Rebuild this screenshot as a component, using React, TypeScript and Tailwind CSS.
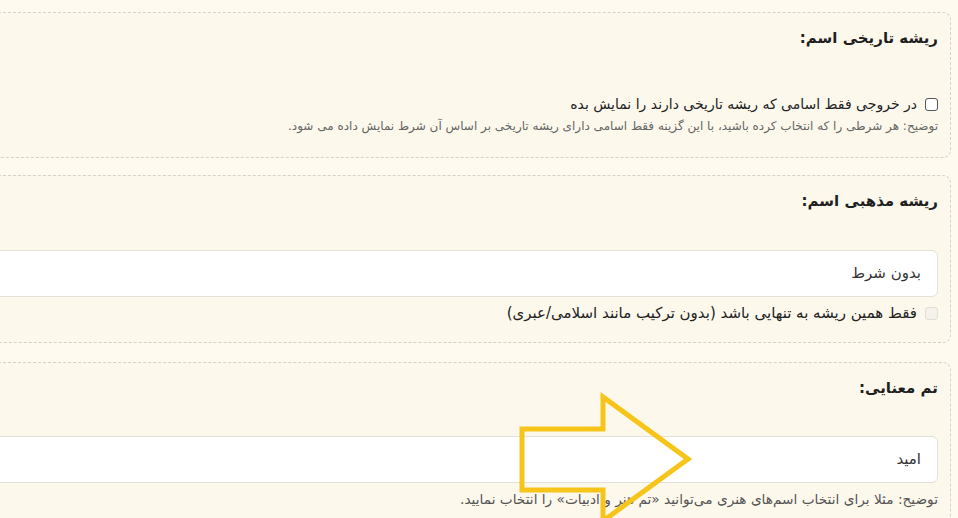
const FONT = "font-['DejaVu_Sans',sans-serif]";

function Section({
  title,
  children,
  className = "",
}: {
  title: string;
  children: React.ReactNode;
  className?: string;
}) {
  return (
    <section
      className={`rounded-lg border border-dashed border-[#d6d2c8] bg-[#fdf8ec] pr-[12px] ${className}`}
    >
      <h3 className="text-[15px] leading-[24px] font-bold text-[#1f1f1f]">{title}</h3>
      {children}
    </section>
  );
}

function Arrow() {
  return (
    <svg
      className="pointer-events-none absolute left-0 top-0"
      width="958"
      height="518"
      viewBox="0 0 958 518"
    >
      <polygon
        points="522,429 603,429 603,397 688,459 603,521 603,490 522,490"
        fill="none"
        stroke="#f7c41a"
        strokeWidth="5"
        strokeLinejoin="miter"
      />
    </svg>
  );
}

export default function App() {
  return (
    <div
      dir="rtl"
      className={`relative h-[518px] w-[958px] overflow-hidden bg-[#fffaf0] pt-[12px] ${FONT}`}
    >
      <div className="-ml-[60px] mr-[7px] flex flex-col">
        <Section title="ریشه تاریخی اسم:" className="h-[146px] pt-[13px]">
          <label className="mt-[45px] flex items-center gap-[8px] text-[14px] leading-[18px] text-[#222]">
            <span className="h-[13px] w-[13px] shrink-0 rounded-[3px] border border-[#555] bg-white" />
            در خروجی فقط اسامی که ریشه تاریخی دارند را نمایش بده
          </label>
          <p className="mt-[5px] text-[12px] leading-[16px] text-[#666]">
            توضیح: هر شرطی را که انتخاب کرده باشید، با این گزینه فقط اسامی دارای ریشه تاریخی بر اساس آن شرط نمایش داده می شود.
          </p>
        </Section>

        <Section title="ریشه مذهبی اسم:" className="mt-[17px] h-[168px] pt-[13px]">
          <div className="mt-[37px] flex h-[47px] items-center rounded-md border border-[#e4e1da] bg-white pr-[16px] text-[15px] text-[#333]">
            بدون شرط
          </div>
          <label className="mt-[7px] flex items-center gap-[8px] text-[15px] leading-[18px] text-[#222]">
            <span className="h-[13px] w-[13px] shrink-0 rounded-[3px] border border-[#e2ded6] bg-[#f5f2ec]" />
            فقط همین ریشه به تنهایی باشد (بدون ترکیب مانند اسلامی/عبری)
          </label>
        </Section>

        <Section title="تم معنایی:" className="mt-[19px] h-[170px] pt-[13px]">
          <div className="mt-[36px] flex h-[47px] items-center rounded-md border border-[#e4e1da] bg-white pr-[16px] text-[15px] text-[#333]">
            امید
          </div>
          <p className="mt-[8px] text-[13.7px] leading-[16px] text-[#555]">
            توضیح: مثلا برای انتخاب اسم‌های هنری می‌توانید «تم هنر و ادبیات» را انتخاب نمایید.
          </p>
        </Section>
      </div>
      <Arrow />
    </div>
  );
}
